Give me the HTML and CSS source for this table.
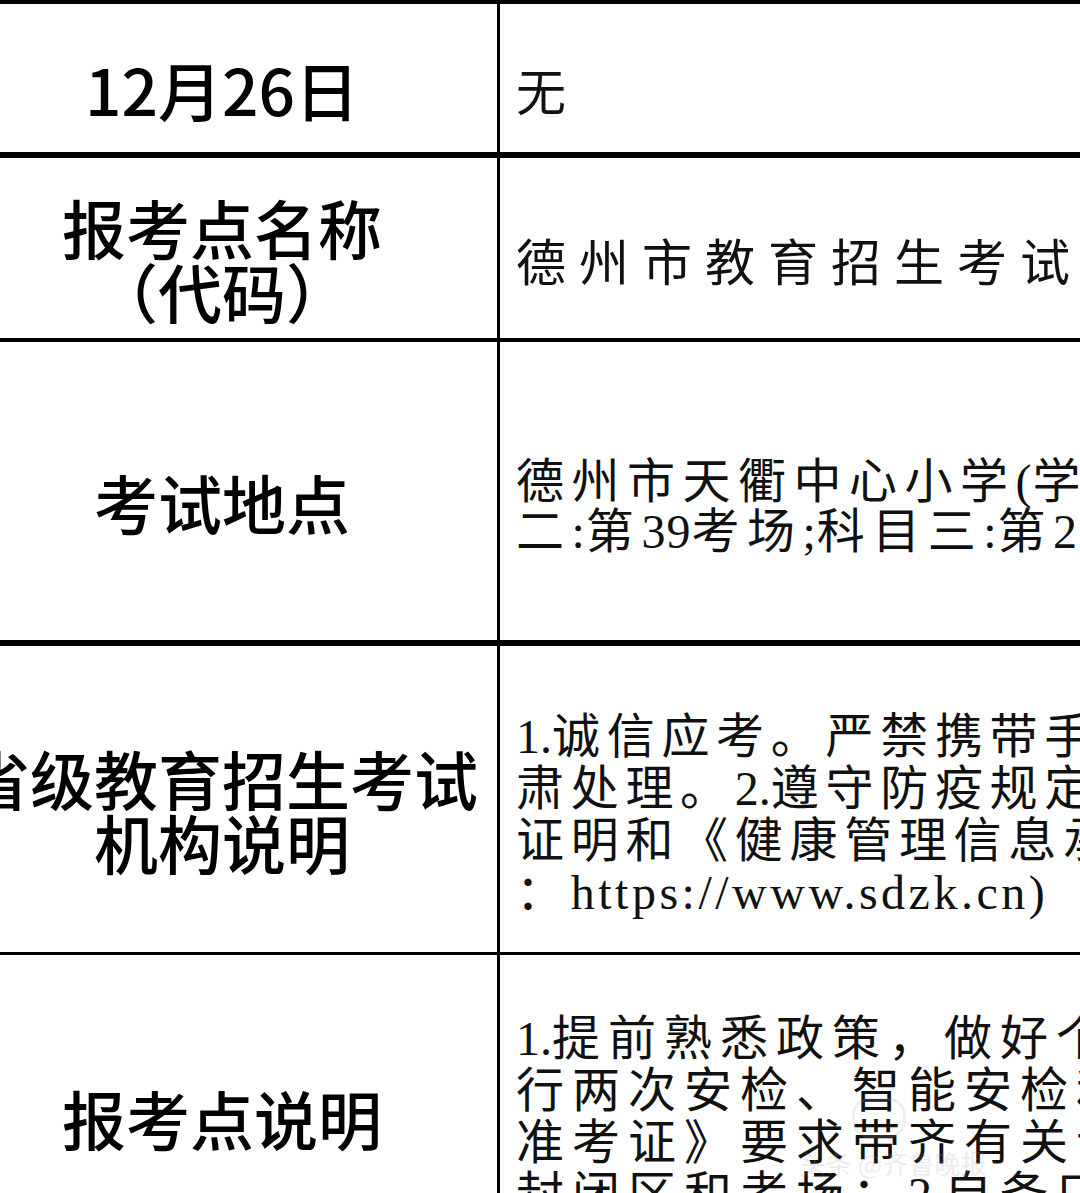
FILE: index.html
```html
<!DOCTYPE html>
<html lang="zh-CN">
<head>
<meta charset="utf-8">
<title>考试信息</title>
<link rel="stylesheet" href="styles.css">
</head>
<body>
<div class="sheet">
  <div class="row r1">
    <div class="label">12月26日</div>
    <div class="value v1"><span class="line">无</span></div>
  </div>
  <div class="row r2">
    <div class="label"><span>报考点名称</span><span>（代码）</span></div>
    <div class="value v2"><span class="line">德州市教育招生考试院（1401）</span></div>
  </div>
  <div class="row r3">
    <div class="label">考试地点</div>
    <div class="value v3">
      <span class="line">德州市天衢中心小学<span class="lat">(</span>学校地址：德州市天衢东路)科目一:第38考场;科目</span>
      <span class="line">二<span class="lat">:</span>第<span class="lat">39</span>考场<span class="lat">;</span>科目三<span class="lat">:</span>第<span class="lat">27</span>考场</span>
    </div>
  </div>
  <div class="row r4">
    <div class="label"><span>省级教育招生考试</span><span>机构说明</span></div>
    <div class="value v4">
      <span class="line"><span class="num">1.</span>诚信应考。严禁携带手机等通讯工具进入考场，违者严</span>
      <span class="line">肃处理。<span class="num">2.</span>遵守防疫规定，考生须按要求提供核酸检测阴性</span>
      <span class="line">证明和《健康管理信息承诺书》。（详见山东省教育招生考试院网站</span>
      <span class="line">：<span class="url">https://www.sdzk.cn)</span></span>
    </div>
  </div>
  <div class="row r5">
    <div class="label">报考点说明</div>
    <div class="value v5">
      <span class="line"><span class="num">1.</span>提前熟悉政策，做好个人防护，考生进入考点需进</span>
      <span class="line">行两次安检、智能安检和人工安检，考生须按《</span>
      <span class="line">准考证》要求带齐有关证件，按时进入考点</span>
      <span class="line">封闭区和考场；<span class="num">2.</span>自备口罩</span>
    </div>
  </div>
</div>
<div class="watermark"><span class="wm-logo"></span><span class="wm-text">头条 @齐鲁晚报</span></div>
</body>
</html>
```

FILE: styles.css
```css
html, body {
  margin: 0;
  padding: 0;
  overflow: hidden;
  background: #ffffff;
  width: 1080px;
  height: 1193px;
}

.sheet {
  width: 1700px;
  margin-left: -53px;
  display: flex;
  flex-direction: column;
}

.row {
  display: grid;
  grid-template-columns: 553px 1147px;
  border-top: 4px solid #000;
  box-sizing: border-box;
}

.r1 { height: 152px; border-top-width: 4px; }
.r2 { height: 186px; border-top-width: 6px; }
.r3 { height: 302px; border-top-width: 4px; }
.r4 { height: 312px; border-top-width: 6px; }
.r5 { height: 306px; border-top-width: 3px; }

.label {
  box-sizing: border-box;
  border-right: 3px solid #000;
  display: flex;
  flex-direction: column;
  align-items: center;
  justify-content: center;
  padding-top: 20px;
  font-family: "Noto Sans CJK SC", "Noto Sans", sans-serif;
  font-weight: 500;
  font-size: 64px;
  line-height: 64px;
  color: #000;
  white-space: nowrap;
}

.value {
  box-sizing: border-box;
  display: flex;
  flex-direction: column;
  justify-content: center;
  padding-left: 16px;
  padding-top: 32px;
  font-family: "Liberation Serif", "Noto Sans CJK SC", serif;
  font-weight: 400;
  color: #111;
  overflow: hidden;
}

.r5 .value { padding-top: 20px; }

.line {
  display: block;
  white-space: nowrap;
}

.num { letter-spacing: 0; }
.lat { letter-spacing: 1px; }
.url { letter-spacing: 3.5px; }

.v1 { font-size: 50px; line-height: 56px; }
.v2 { font-size: 50px; line-height: 56px; letter-spacing: 13px; }
.v3 { font-size: 48px; line-height: 50px; letter-spacing: 7.5px; }
.v4 { font-size: 48px; line-height: 52px; letter-spacing: 6.7px; }
.v5 { font-size: 48px; line-height: 52px; letter-spacing: 8px; }

.watermark {
  position: absolute;
  left: 800px;
  top: 1098px;
  display: flex;
  flex-direction: column;
  align-items: flex-end;
  opacity: 0.18;
  pointer-events: none;
}

.wm-logo {
  width: 48px;
  height: 34px;
  border-radius: 17px;
  border: 3px solid #aaa;
  margin-right: 80px;
}

.wm-text {
  font-family: "Noto Sans CJK SC", sans-serif;
  font-size: 26px;
  color: #999;
  margin-top: 6px;
}
```
